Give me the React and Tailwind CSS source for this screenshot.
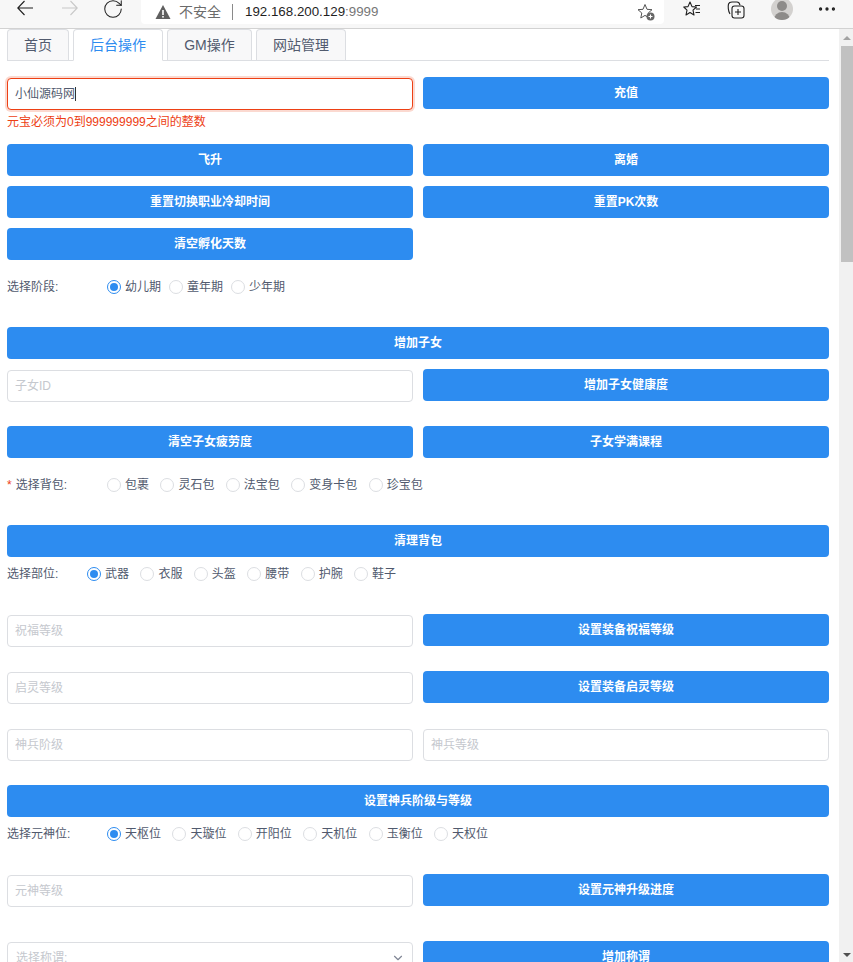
import { RotateCw, ChevronDown, MoreHorizontal } from 'lucide-react'

const inputClass = 'h-8 w-full rounded border border-[#dcdee2] bg-white px-[7px] text-xs text-[#515a6e] placeholder:text-[#c5c8ce] outline-none'

function Btn({ children, className = '' }) {
    return (
        <button className={`block h-8 w-full rounded bg-[#2d8cf0] text-xs font-bold text-white ${className}`}>
            {children}
        </button>
    )
}

function Field({ placeholder }) {
    return <input className={`${inputClass} mt-px`} placeholder={placeholder} readOnly />
}

function Row({ children, className = '' }) {
    return <div className={`grid grid-cols-2 gap-x-[10px] ${className}`}>{children}</div>
}

function Radios({ label, labelWidth, items, required, checked = 0, tight, className = '' }) {
    return (
        <div className={`flex h-[18px] items-center text-xs text-[#515a6e] ${className}`}>
            <div className={`flex shrink-0 items-center ${labelWidth}`}>
                {required && <span className="mr-[4px] text-[#ed4014]">*</span>}
                <span>{label}:</span>
            </div>
            {items.map((item, i) => (
                <div key={item} className={`flex items-center gap-[4px] ${tight ? 'mr-[8px]' : 'mr-[11.4px]'}`}>
                    {i === checked ? (
                        <span className="flex h-[14px] w-[14px] items-center justify-center rounded-full border border-[#2d8cf0] bg-white">
                            <span className="h-[8px] w-[8px] rounded-full bg-[#2d8cf0]"></span>
                        </span>
                    ) : (
                        <span className="h-[14px] w-[14px] rounded-full border border-[#dcdee2] bg-white"></span>
                    )}
                    <span>{item}</span>
                </div>
            ))}
        </div>
    )
}

function Tab({ children, active, className = '' }) {
    return (
        <div
            className={`flex items-center justify-center rounded-t border border-[#dcdee2] text-sm ${className} ${
                active
                    ? 'relative z-10 h-[32px] -mb-px border-b-white bg-white text-[#2d8cf0]'
                    : 'h-[31px] border-b-0 bg-[#f8f8f9] text-[#515a6e]'
            }`}
        >
            {children}
        </div>
    )
}

function BrowserBar() {
    return (
        <div className="flex h-[29px] items-start border-b border-[#d2d2d2] bg-[#f7f7f7] text-[#1f1f1f]">
            <svg viewBox="0 0 16 16" className="ml-[17px] h-[16px] w-[16px]" fill="none" stroke="#1f1f1f" strokeWidth="1.1">
                <path d="M7.5 1 L0.8 8 L7.5 15 M0.8 8 H16" />
            </svg>
            <svg viewBox="0 0 16 16" className="ml-[29px] h-[16px] w-[16px]" fill="none" stroke="#c8c8c8" strokeWidth="1.1">
                <path d="M8.5 1 L15.2 8 L8.5 15 M15.2 8 H0" />
            </svg>
            <RotateCw className="ml-[24px] mt-[-2px] h-[22px] w-[22px]" strokeWidth={1.1} />
            <div className="ml-[17px] flex h-[24px] w-[523px] items-center rounded-b bg-white">
                <svg viewBox="0 0 16 16" className="ml-[14px] h-[16px] w-[16px]">
                    <path d="M8 1 L15.5 15 H0.5 Z" fill="#5f5f5f" />
                    <rect x="7.2" y="6" width="1.6" height="5" fill="#fff" />
                    <rect x="7.2" y="12" width="1.6" height="1.6" fill="#fff" />
                </svg>
                <span className="ml-[8px] text-sm text-[#6b6b6b]">不安全</span>
                <span className="ml-[11px] h-[16px] w-px bg-[#8a8a8a]"></span>
                <span className="ml-[12px] text-[13.33px] text-[#1f1f1f]">
                    192.168.200.129<span className="text-[#777]">:9999</span>
                </span>
                <svg viewBox="0 0 18 18" className="ml-auto mr-[9px] h-[18px] w-[18px]" fill="none">
                    <path d="M8 1.5 L10 6.3 L15 6.7 L11.2 10 L12.2 15 L8 12.4 L3.8 15 L4.8 10 L1 6.7 L6 6.3 Z" stroke="#555" strokeWidth="1" strokeLinejoin="round" />
                    <circle cx="13.5" cy="13.5" r="4" fill="#666" />
                    <path d="M13.5 11.5 V15.5 M11.5 13.5 H15.5" stroke="#fff" strokeWidth="1.1" />
                </svg>
            </div>
            <svg viewBox="0 0 18 18" className="ml-[19px] mt-px h-[18px] w-[18px]" fill="none" stroke="#1f1f1f" strokeWidth="1.1">
                <path d="M7 1 L9 5.6 L13.5 6 L10 9.2 L11 14 L7 11.5 L3 14 L4 9.2 L0.8 6 L5 5.6 Z" strokeLinejoin="round" />
                <path d="M12 4.5 H17 M13 8 H17 M12.5 11.5 H17" />
            </svg>
            <svg viewBox="0 0 18 18" className="ml-[26px] mt-px h-[18px] w-[18px]" fill="none" stroke="#1f1f1f" strokeWidth="1.1">
                <path d="M3 13 C1 10 1 5 1.5 3 C2 1.5 3 1 5 1 H10 C11.5 1 12.5 2 13 4" />
                <rect x="5" y="5" width="12" height="12" rx="2.5" />
                <path d="M11 8 V14 M8 11 H14" />
            </svg>
            <div className="ml-[26px] mt-[-2px] h-[22px] w-[22px] overflow-hidden rounded-full bg-[#d3d1cf]">
                <div className="mx-auto mt-[3px] h-[10px] w-[10px] rounded-full bg-[#8d8b89]"></div>
                <div className="mx-auto mt-[1px] h-[10px] w-[16px] rounded-t-full bg-[#8d8b89]"></div>
            </div>
            <MoreHorizontal className="ml-[23px] mt-[-2px] h-[22px] w-[22px]" strokeWidth={1.6} />
        </div>
    )
}

function Scrollbar() {
    return (
        <div className="flex w-[14px] shrink-0 flex-col bg-[#f1f1f1]">
            <div className="flex h-[17px] justify-end pr-[2px] pt-[7px]">
                <div className="h-0 w-0 border-x-[4px] border-b-[4px] border-x-transparent border-b-[#a3a3a3]"></div>
            </div>
            <div className="ml-[2px] h-[216px] bg-[#c1c1c1]"></div>
            <div className="flex flex-1 items-end justify-end pb-[5px] pr-[2px]">
                <div className="h-0 w-0 border-x-[4px] border-t-[4px] border-x-transparent border-t-[#505050]"></div>
            </div>
        </div>
    )
}

export default function App() {
    return (
        <div className="flex h-[962px] w-[853px] flex-col overflow-hidden bg-white font-['Liberation_Sans','Noto_Sans_CJK_SC',sans-serif]">
            <BrowserBar />
            <div className="flex min-h-0 flex-1">
                <div className="min-w-0 flex-1 overflow-hidden pl-[7px] pr-[10px]">
                    {/* tabs */}
                    <div className="flex items-start gap-[4px] border-b border-[#dcdee2]">
                        <Tab className="w-[62px]">首页</Tab>
                        <Tab active className="w-[90px]">后台操作</Tab>
                        <Tab className="w-[85px]">GM操作</Tab>
                        <Tab className="w-[90px]">网站管理</Tab>
                    </div>

                    {/* recharge */}
                    <Row className="mt-[16px] items-start">
                        <div className="mt-px flex h-8 w-full items-center rounded border border-[#ed4014] bg-white px-[7px] text-xs text-[#515a6e] shadow-[0_0_0_2px_rgba(237,64,20,0.2)]">
                            <span>小仙源码网</span>
                            <span className="h-[14px] w-px bg-[#333]"></span>
                        </div>
                        <Btn>充值</Btn>
                    </Row>
                    <div className="mt-[3px] h-[18px] text-xs leading-[18px] text-[#ed4014]">元宝必须为0到999999999之间的整数</div>

                    <Row className="mt-[13px]">
                        <Btn>飞升</Btn>
                        <Btn>离婚</Btn>
                    </Row>
                    <Row className="mt-[10px]">
                        <Btn>重置切换职业冷却时间</Btn>
                        <Btn>重置PK次数</Btn>
                    </Row>
                    <Row className="mt-[10px]">
                        <Btn>清空孵化天数</Btn>
                    </Row>

                    <Radios className="mt-[18px]" tight label="选择阶段" labelWidth="w-[100px]" items={['幼儿期', '童年期', '少年期']} />

                    <Btn className="mt-[31px]">增加子女</Btn>
                    <Row className="mt-[10px] items-start">
                        <Field placeholder="子女ID" />
                        <Btn>增加子女健康度</Btn>
                    </Row>
                    <Row className="mt-[24px]">
                        <Btn>清空子女疲劳度</Btn>
                        <Btn>子女学满课程</Btn>
                    </Row>

                    <Radios className="mt-[18px]" required checked={-1} label="选择背包" labelWidth="w-[100px]" items={['包裹', '灵石包', '法宝包', '变身卡包', '珍宝包']} />

                    <Btn className="mt-[31px]">清理背包</Btn>
                    <Radios className="mt-[8px]" label="选择部位" labelWidth="w-[80px]" items={['武器', '衣服', '头盔', '腰带', '护腕', '鞋子']} />

                    <Row className="mt-[31px] items-start">
                        <Field placeholder="祝福等级" />
                        <Btn>设置装备祝福等级</Btn>
                    </Row>
                    <Row className="mt-[24px] items-start">
                        <Field placeholder="启灵等级" />
                        <Btn>设置装备启灵等级</Btn>
                    </Row>
                    <Row className="mt-[24px] items-start">
                        <Field placeholder="神兵阶级" />
                        <Field placeholder="神兵等级" />
                    </Row>

                    <Btn className="mt-[24px]">设置神兵阶级与等级</Btn>
                    <Radios className="mt-[8px]" label="选择元神位" labelWidth="w-[100px]" items={['天枢位', '天璇位', '开阳位', '天机位', '玉衡位', '天权位']} />

                    <Row className="mt-[31px] items-start">
                        <Field placeholder="元神等级" />
                        <Btn>设置元神升级进度</Btn>
                    </Row>
                    <Row className="mt-[34px] items-start">
                        <div className="mt-px flex h-8 items-center justify-between rounded border border-[#dcdee2] bg-white pl-[8px] pr-[7px] text-xs text-[#c5c8ce]">
                            <span>选择称谓:</span>
                            <ChevronDown className="h-[14px] w-[14px] text-[#808695]" />
                        </div>
                        <Btn>增加称谓</Btn>
                    </Row>
                </div>
                <Scrollbar />
            </div>
        </div>
    )
}
